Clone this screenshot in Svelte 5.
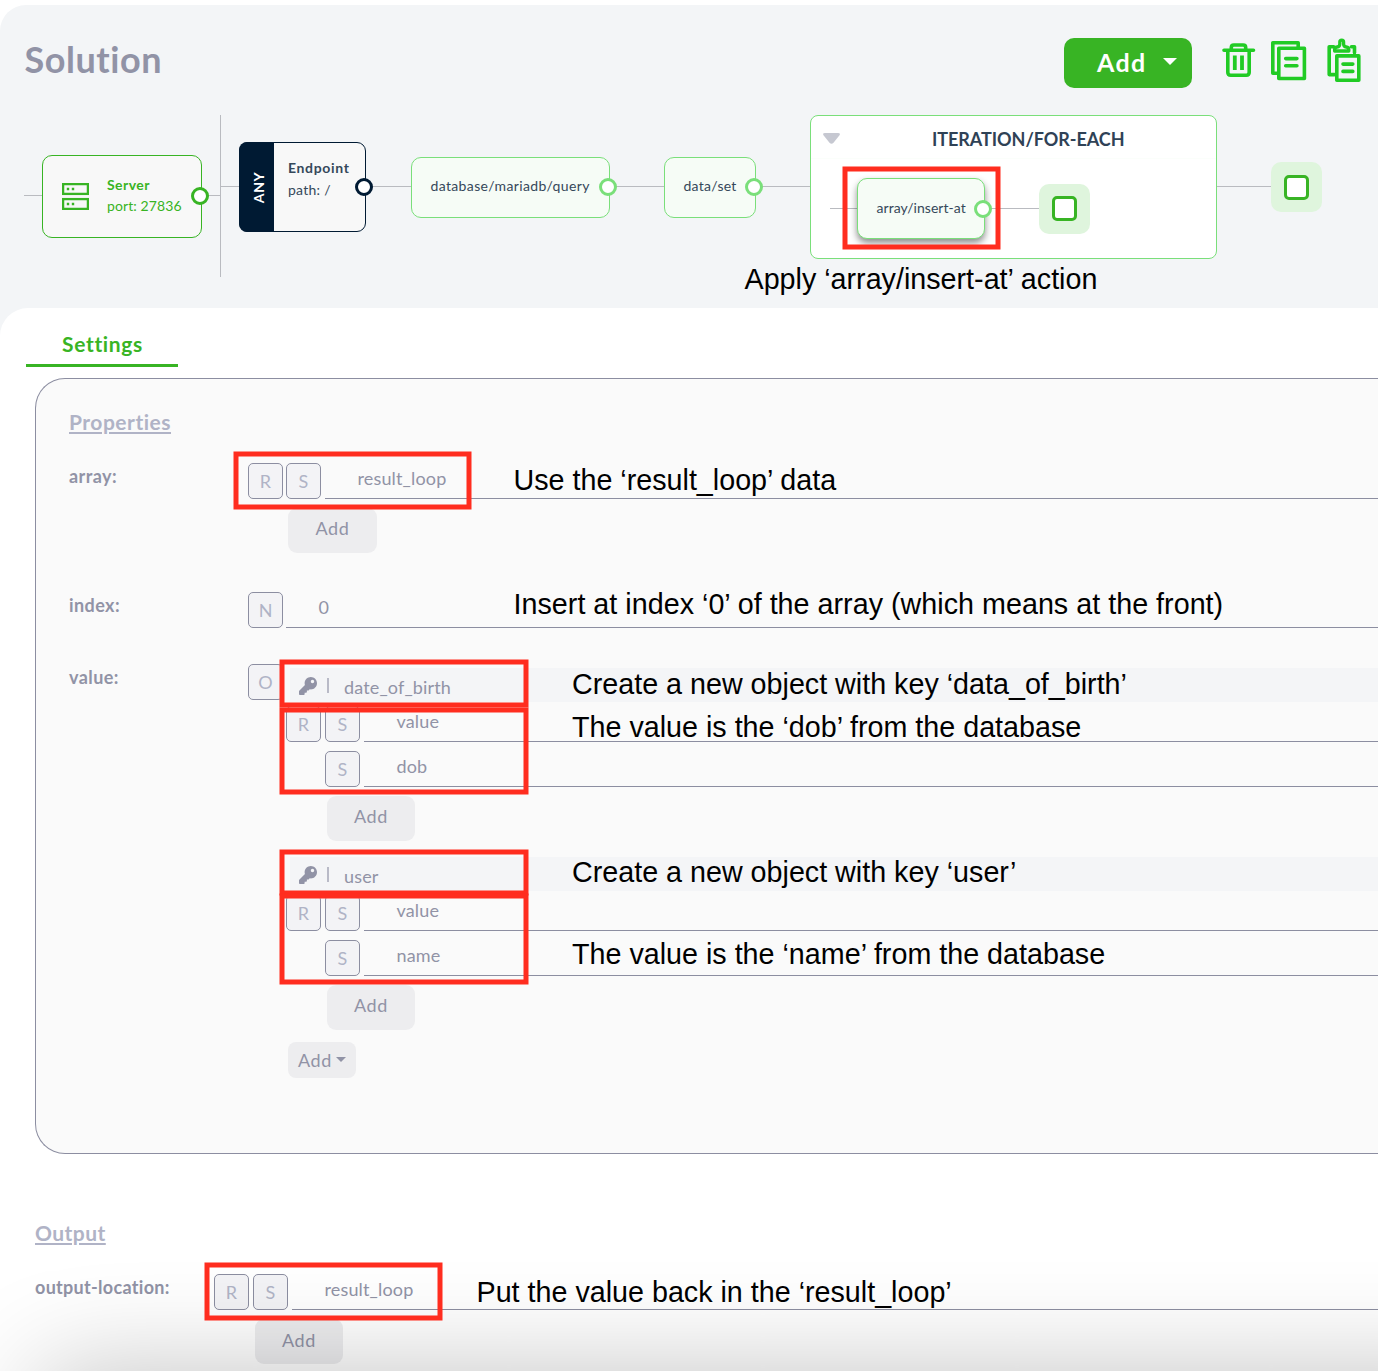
<script>
  const highlights = [
    { x: 845, y: 169, w: 153, h: 78 },
    { x: 236, y: 454, w: 233, h: 53 },
    { x: 282, y: 662, w: 244, h: 43 },
    { x: 282, y: 710, w: 244, h: 82 },
    { x: 282, y: 852, w: 244, h: 41 },
    { x: 282, y: 896, w: 244, h: 86 },
    { x: 207, y: 1265, w: 233, h: 53 }
  ];
  const entries = [
    { key: 'date_of_birth', value: 'dob' },
    { key: 'user', value: 'name' }
  ];
</script>

{#snippet chip(letter)}
  <span class="chip">{letter}</span>
{/snippet}

{#snippet keyIcon()}
  <svg class="key" width="18" height="18" viewBox="0 0 512 512">
    <path fill="#9193a6" d="M512 176c0 97-79 176-176 176-11 0-22-1-33-3l-24 27c-4 5-11 8-18 8h-37v40c0 13-11 24-24 24h-40v40c0 13-11 24-24 24H24c-13 0-24-11-24-24v-78c0-6 3-12 7-17l162-162c-6-17-9-36-9-55C160 79 239 0 336 0s176 79 176 176zM336 128c0 27 21 48 48 48s48-21 48-48-21-48-48-48-48 21-48 48z" />
  </svg>
{/snippet}

<main class="app">
  <section class="solution">
    <header>
      <h1>Solution</h1>
      <div class="tools">
        <button class="primary">Add <i class="caret"></i></button>
        <svg class="icons" width="142" height="48" viewBox="1221 38 142 48" fill="none" stroke="#21cb25" stroke-width="3.6" stroke-linecap="round" stroke-linejoin="round">
          <path d="M1224 50.3h29.5M1227.800 50.5v21.700q0 3 3 3h15.400q3 0 3-3v-21.700M1231.300 49.500v-2q0-2.500 2.500-2.500h9.400q2.500 0 2.500 2.500v2" />
          <path stroke-width="3.800" stroke-linecap="butt" d="M1234.800 55.500v14.500M1242 55.500v14.500" />
          <path d="M1278 73.300h-5.200v-30.500h25.400v4.500M1278.800 48.300h25.600v30.200h-25.600z" />
          <path d="M1285.700 58.600h11.200M1285.700 65.700h11.200" />
          <path d="M1334.500 74.600h-5.300v-27.800h4.500M1351.500 46.800h3v6M1336.800 55.900h22v24.300h-22z" />
          <path stroke-width="3.300" d="M1334.600 51v-1.500q0-2.200 2.500-2.500 2.700-.3 2.700-3v-1.900a1.900 1.900 0 0 1 3.800 0v1.900q0 2.700 2.700 3 2.500.3 2.500 2.500v1.500z" />
          <path d="M1343 64.100h9.800M1343 71.400h9.800" />
        </svg>
      </div>
    </header>

    <div class="canvas">
      <i class="wire server-in"></i>
      <i class="wire main"></i>
      <i class="divider"></i>

      <div class="node server">
        <svg width="27" height="27" viewBox="0 0 27 27" fill="none" stroke="#38b424" stroke-width="2.300">
          <rect x="1.100" y="1.100" width="24.800" height="9.800" /><rect x="1.100" y="16.100" width="24.800" height="9.800" />
          <path stroke-width="2.400" d="M4.800 6h2.400M9.800 6h2.400M4.800 21h2.400M9.800 21h2.400" />
        </svg>
        <div><b>Server</b><span>port: 27836</span></div>
        <i class="port"></i>
      </div>

      <div class="node endpoint">
        <div class="method"><span>ANY</span></div>
        <div class="info"><b>Endpoint</b><span>path: /</span></div>
        <i class="port"></i>
      </div>

      <div class="node step query">database/mariadb/query<i class="port"></i></div>
      <div class="node step set">data/set<i class="port"></i></div>

      <div class="loop">
        <div class="loop-title">
          <svg width="17" height="11" viewBox="0 0 17 11"><path fill="#c6c8d1" d="M2 0h13q3 0 1.300 2.500l-5.800 7.200q-2 2-4 0l-5.800-7.200q-1.700-2.500 1.300-2.500z" /></svg>
          <b>ITERATION/FOR-EACH</b>
        </div>
        <i class="wire inner"></i>
        <div class="node step insert">array/insert-at<i class="port"></i></div>
        <div class="slot inside"><i></i></div>
      </div>
      <div class="slot end"><i></i></div>
    </div>
  </section>

  <section class="panel">
    <div class="tab">Settings</div>

    <div class="group">
      <h2>Properties</h2>
      <div class="row array">
        <span class="label">array:</span>
        <div class="fields">
          <div class="field tight">{@render chip('R')}{@render chip('S')}<span class="input">result_loop</span></div>
          <button class="add">Add</button>
        </div>
      </div>
      <div class="row index">
        <span class="label">index:</span>
        <div class="fields">
          <div class="field single">{@render chip('N')}<span class="input">0</span></div>
        </div>
      </div>
      <div class="row">
        <span class="label">value:</span>
        <div class="fields object">
          {@render chip('O')}
          <div class="entries">
            {#each entries as entry}
              <div class="entry">
                <div class="entry-key">{@render keyIcon()}<i></i><span>{entry.key}</span></div>
                <div class="field">{@render chip('R')}{@render chip('S')}<span class="input">value</span></div>
                <div class="field nested">{@render chip('S')}<span class="input">{entry.value}</span></div>
                <button class="add">Add</button>
              </div>
            {/each}
            <button class="add-menu">Add<i class="caret"></i></button>
          </div>
        </div>
      </div>
    </div>

    <div class="output">
      <h2>Output</h2>
      <div class="row">
        <span class="label">output-location:</span>
        <div class="fields">
          <div class="field">{@render chip('R')}{@render chip('S')}<span class="input">result_loop</span></div>
          <button class="add">Add</button>
        </div>
      </div>
    </div>
  </section>

  <div class="shade"></div>

  <div class="notes">
    <svg width="1378" height="1371" fill="none" stroke="#ff2d1f" stroke-width="5">
      {#each highlights as h}
        <rect x={h.x} y={h.y} width={h.w} height={h.h} />
      {/each}
    </svg>
    <p class="n1">Apply ‘array/insert-at’ action</p>
    <p class="n2">Use the ‘result_loop’ data</p>
    <p class="n3">Insert at index ‘0’ of the array (which means at the front)</p>
    <p class="n4">Create a new object with key ‘data_of_birth’</p>
    <p class="n5">The value is the ‘dob’ from the database</p>
    <p class="n6">Create a new object with key ‘user’</p>
    <p class="n7">The value is the ‘name’ from the database</p>
    <p class="n8">Put the value back in the ‘result_loop’</p>
  </div>
</main>

<style>
  :global(body) { margin: 0; background: #fff; }
  * { box-sizing: border-box; }
  .app {
    position: relative;
    height: 1371px;
    padding-top: 5px;
    overflow: hidden;
    background: #fff;
    font-family: Lato, "Open Sans", sans-serif;
    color: #9193a6;
  }
  h1, h2, p { margin: 0; }
  button { border: 0; padding: 0; font-family: inherit; display: block; }
  .solution { height: 331px; background: #f3f5f7; border-top-left-radius: 26px; }

  header { height: 95px; padding: 33px 15px 0 24.500px; display: flex; justify-content: space-between; align-items: flex-start; }
  h1 { font-size: 36px; line-height: 42px; letter-spacing: .55px; font-weight: 700; }
  .tools { display: flex; gap: 29px; }
  .primary {
    width: 128px; height: 50px; border-radius: 10px; background: #38b424; color: #fff;
    font-size: 25px; font-weight: 700; letter-spacing: 1.300px; line-height: 48px;
    display: flex; align-items: center; padding: 0 0 2px 33px; gap: 16px;
  }
  .caret { width: 0; height: 0; border: solid transparent; border-width: 7.500px 7.500px 0; border-top-color: currentColor; }
  .primary .caret { margin-top: -2px; margin-left: 1px; }

  .canvas { position: relative; height: 208px; }
  .wire { position: absolute; height: 1px; background: #b9bbc0; }
  .server-in { left: 24px; width: 196px; top: 95px; }
  .main { left: 220px; width: 1060px; top: 86px; }
  .divider { position: absolute; left: 220px; top: 15px; width: 1px; height: 162px; background: #b9bbc0; }
  .node { position: absolute; border: 1px solid; border-radius: 10px; background: #f8f8f8; font-size: 14px; }
  .node b, .node span { display: block; }
  .port { position: absolute; right: -8px; width: 18px; height: 18px; border: 3px solid; border-radius: 50%; background: #fff; }
  .server { left: 42px; top: 55px; width: 160px; height: 83px; color: #38b424; padding: 18px 0 0 19px; display: flex; gap: 18px; }
  .server svg { margin-top: 9px; flex: none; }
  .server b { line-height: 21px; letter-spacing: .45px; }
  .server span { line-height: 21px; letter-spacing: .1px; white-space: nowrap; }
  .server .port { top: 31px; }
  .endpoint { left: 239px; top: 42px; width: 127px; height: 90px; color: #001a33; display: flex; border-radius: 9px; }
  .method { width: 35px; margin: -1px 0 -1px -1px; background: #001a33; border-radius: 8px 0 0 8px; color: #fff; display: flex; align-items: center; justify-content: center; font-weight: 700; letter-spacing: .6px; }
  .method span { transform: rotate(-90deg); margin-left: 5px; }
  .info { padding: 14px 0 0 14px; color: #35485a; }
  .info b { line-height: 22px; letter-spacing: .65px; }
  .info span { line-height: 22px; letter-spacing: .25px; }
  .endpoint .port { top: 35px; }
  .step { height: 61px; border-color: #7adf7a; background: #f6fcf6; color: #35485a; line-height: 56px; padding-left: 18.500px; white-space: nowrap; }
  .step .port { top: 20px; border-color: #7adf7a; }
  .query { left: 411px; top: 57px; width: 199px; letter-spacing: .36px; }
  .set { left: 664px; top: 57px; width: 92px; letter-spacing: .28px; }
  .loop { position: absolute; left: 810px; top: 15px; width: 407px; height: 144px; border: 1px solid #7adf7a; border-radius: 8px; background: #fff; }
  .loop-title { height: 43px; padding: 0 12px; display: flex; border-bottom: 1px solid #fbfefb; }
  .loop-title svg { margin-top: 17px; }
  .loop-title b { margin-left: 92px; font-size: 18px; line-height: 46px; color: #2f4256; letter-spacing: -.05px; }
  .inner { left: 19px; width: 220px; top: 92px; }
  .insert { left: 46px; top: 62px; width: 128px; letter-spacing: .04px; box-shadow: 0 4px 7px rgba(0, 0, 0, .45); }
  .insert .port { top: 21px; }
  .step.insert { line-height: 58px; }
  .slot { position: absolute; width: 51px; height: 50px; border-radius: 10px; background: #dff5dd; display: flex; align-items: center; justify-content: center; }
  .slot i { width: 25px; height: 25px; border: 3px solid #38b424; border-radius: 5px; background: #fff; }
  .inside { left: 228px; top: 68px; padding-bottom: 1px; }
  .end { left: 1271px; top: 62px; }

  .panel { position: relative; margin-top: -28px; background: #fff; border-top-left-radius: 28px; height: 1063px; }
  .tab { width: 152px; height: 59px; margin-left: 26px; border-bottom: 3px solid #38b424; color: #38b424; font-size: 21px; font-weight: 700; letter-spacing: .65px; line-height: 72px; text-align: center; padding-left: 1px; }
  .group { margin: 11px 0 0 35px; height: 776px; border: 1px solid #8c8ea1; border-right: 0; border-radius: 30px 0 0 30px; background: #fafafa; padding: 29px 0 0 33px; }
  h2 { font-size: 21px; line-height: 28px; letter-spacing: .5px; color: #b0b3c6; font-weight: 700; text-decoration: underline; text-decoration-thickness: 2px; text-underline-offset: 2px; }
  .row { display: flex; align-items: flex-start; margin-top: 27px; }
  .label { width: 179px; flex: none; font-size: 18px; font-weight: 700; line-height: 26px; letter-spacing: .42px; }
  .fields { flex: 1; }
  .field { display: flex; gap: 4px; height: 36px; }
  .tight { gap: 3px; }
  .tight .input { margin-left: 1px; }
  .single { gap: 3px; }
  .chip { flex: none; width: 35px; height: 36px; border: 1px solid #8c8ea1; border-radius: 5px; background: #f3f3f6; color: #b0b3c6; font-size: 18px; line-height: 34px; text-align: center; }
  .input { flex: 1; border-bottom: 1px solid #8c8ea1; padding-left: 32.500px; font-size: 18px; line-height: 30px; letter-spacing: .15px; }
  .add { width: 88px; height: 45px; margin: 9px 0 0 41px; border-radius: 9px; background: #ededef; color: #9193a6; font-size: 18px; line-height: 40px; letter-spacing: .7px; padding-bottom: 5px; }
  .array .add { width: 89px; margin-left: 40px; }
  .output .add { line-height: 42px; padding-bottom: 3px; }
  .row.index { margin-top: 39px; }
  .index + .row { margin-top: 36px; }
  .object { display: flex; gap: 3px; }
  .entries { flex: 1; padding-top: 4px; }
  .entry { margin-bottom: 16px; }
  .entry-key { height: 34px; margin: 0 0 4px 4px; padding-left: 9px; background: #f4f5f7; display: flex; font-size: 18px; letter-spacing: .15px; line-height: 38px; }
  .key { margin-top: 9px; }
  .entry-key i { width: 2px; height: 15px; margin: 10px 15px 0 10px; background: #b9bac7; }
  .nested { margin: 9px 0 0 39px; }
  .add-menu { width: 68px; height: 36px; margin: -4px 0 0 2px; border-radius: 8px; background: #ededef; color: #9193a6; font-size: 18px; letter-spacing: .7px; display: flex; align-items: center; justify-content: center; gap: 4px; }
  .add-menu .caret { border-width: 5.500px 5.500px 0; margin-top: -2px; }
  .output { margin: 65px 0 0 35px; }
  .output h2 { letter-spacing: .45px; }
  .output .label { letter-spacing: .3px; }

  .shade { position: absolute; left: 40px; top: 1371px; width: 1500px; height: 300px; box-shadow: 0 0 110px rgba(0, 0, 0, .24); }

  .notes { position: absolute; inset: 0; color: #000; font: 28.700px/28px "Liberation Sans", Arial, sans-serif; white-space: nowrap; }
  .notes svg, .notes p { position: absolute; }
  .n1 { left: 744.500px; top: 265px; }
  .n2 { left: 513.500px; top: 466px; }
  .n3 { left: 513.500px; top: 590px; letter-spacing: .02px; }
  .n4 { left: 572px; top: 670px; }
  .n5 { left: 572px; top: 713px; }
  .n6 { left: 572px; top: 858px; }
  .n7 { left: 572px; top: 940px; }
  .n8 { left: 476.500px; top: 1278px; }
</style>
